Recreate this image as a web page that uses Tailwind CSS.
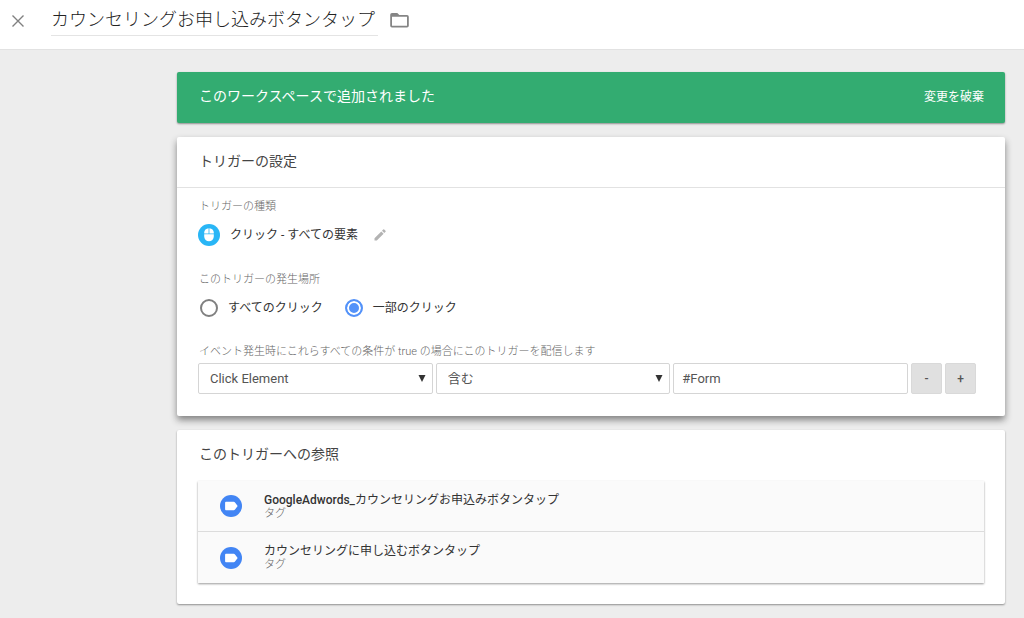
<!DOCTYPE html>
<html lang="ja">
<head>
<meta charset="utf-8">
<meta name="viewport" content="width=device-width, initial-scale=1">
<title>トリガーの設定</title>
<script src="https://cdn.jsdelivr.net/npm/@tailwindcss/browser@4"></script>
</head>
<body class="min-h-screen bg-[#ededed] font-[Roboto,'Noto_Sans_CJK_JP',sans-serif] text-xs text-[#444]">
<header class="flex h-[50px] items-start border-b border-[#e2e2e2] bg-white pl-3">
  <button type="button" aria-label="閉じる" class="mt-[15px] flex size-3 items-center justify-center">
    <svg class="size-3" viewBox="0 0 12 12" fill="none" stroke="#808080" stroke-width="1.400"><path d="M.5.5l11 11M11.5.5l-11 11"/></svg>
  </button>
  <input type="text" aria-label="トリガー名" value="カウンセリングお申し込みボタンタップ" class="ml-[27px] h-9 w-[327px] border-b border-[#e4e4e4] bg-transparent text-lg font-light text-[#222] outline-none">
  <button type="button" aria-label="フォルダ" class="mt-[13px] ml-3">
    <svg class="h-[15px] w-[19px]" viewBox="0 0 19 15"><path fill="#858585" fill-rule="evenodd" d="M2 0h5.300l2 2H17a1.800 1.800 0 0 1 1.800 1.800v9A1.800 1.800 0 0 1 17 14.600H2A1.800 1.800 0 0 1 .2 12.800v-11A1.800 1.800 0 0 1 2 0zm0 3.800v9h15v-9z"/></svg>
  </button>
</header>
<main class="flex flex-col gap-[14px] pt-[22px] pr-[19px] pb-[14px] pl-[177px]">
  <section class="flex h-[51px] items-center justify-between rounded-xs bg-[#33ac71] pr-[21px] pb-[2px] pl-[22px] text-white shadow-[0_1px_2px_rgba(0,0,0,0.4)]">
    <p class="pb-px text-sm">このワークスペースで追加されました</p>
    <button type="button" class="text-xs">変更を破棄</button>
  </section>

  <section class="rounded-xs bg-white pb-[22px] shadow-[0_4px_7px_rgba(0,0,0,0.45)]">
    <h2 class="flex h-[51px] items-center border-b border-[#e2e2e2] px-[22px] pb-[2px] text-sm font-normal">トリガーの設定</h2>
    <div class="pr-[29px] pl-[22px]">
      <h3 class="pt-[11px] text-[11px] leading-4 font-light text-[#666]">トリガーの種類</h3>
      <div class="mt-[9px] flex h-[22px] items-center text-[#333]">
        <svg class="-ml-px size-[22px]" viewBox="0 0 22 22"><circle cx="11" cy="11" r="11" fill="#29b6f6"/><path fill="#fff" d="M10.600 4.200v5.200H6.200V8.500c0-2.400 1.900-4.200 4.400-4.300zM11.400 4.200c2.500.1 4.400 1.900 4.400 4.300v.9h-4.400zM6.200 10.200h9.600v2.300a4.800 4.800 0 0 1-9.600 0z"/></svg>
        <span class="ml-[10px]">クリック - すべての要素</span>
        <button type="button" aria-label="編集" class="ml-4">
          <svg class="size-3" viewBox="0 0 12 12" fill="#b3b3b3"><path d="M.5 9.200l6.800-6.800 2.300 2.300-6.800 6.800H.5zM8 1.700L9.200.5a.7.7 0 0 1 1 0l1.300 1.300a.7.7 0 0 1 0 1L10.300 4z"/></svg>
        </button>
      </div>
      <fieldset>
        <legend class="pt-[26px] text-[11px] leading-4 font-light text-[#666]">このトリガーの発生場所</legend>
        <div class="mt-[9px] flex h-[21px] items-center gap-[22px] text-[#333]">
          <label class="flex items-center gap-[10px]"><input type="radio" name="scope" class="ml-px size-[18px] appearance-none rounded-full border-2 border-[#808080] checked:border-[#5392f9] checked:bg-[#5392f9] checked:shadow-[inset_0_0_0_2px_white]">すべてのクリック</label>
          <label class="flex items-center gap-[10px]"><input type="radio" name="scope" checked class="size-[18px] appearance-none rounded-full border-2 border-[#808080] checked:border-[#5392f9] checked:bg-[#5392f9] checked:shadow-[inset_0_0_0_2px_white]">一部のクリック</label>
        </div>
      </fieldset>
      <p class="pt-[26px] text-[11px] leading-4 font-light text-[#666]">イベント発生時にこれらすべての条件が true の場合にこのトリガーを配信します</p>
      <div class="mt-[3px] -ml-px grid h-[31px] grid-cols-[1fr_1fr_1fr_31px_31px] gap-[3px] text-[13px] text-[#555]">
        <div class="relative">
          <select aria-label="変数" class="size-full appearance-none rounded-xs border border-[#d5d5d5] bg-white pr-6 pl-[11px]"><option>Click Element</option></select>
          <svg class="pointer-events-none absolute top-[12px] right-[7px] h-[7px] w-2" viewBox="0 0 8 7"><path fill="#333" d="M.5 0h7L4 7z"/></svg>
        </div>
        <div class="relative">
          <select aria-label="演算子" class="size-full appearance-none rounded-xs border border-[#d5d5d5] bg-white pr-6 pl-[11px]"><option>含む</option></select>
          <svg class="pointer-events-none absolute top-[12px] right-[7px] h-[7px] w-2" viewBox="0 0 8 7"><path fill="#333" d="M.5 0h7L4 7z"/></svg>
        </div>
        <input type="text" aria-label="値" value="#Form" class="min-w-0 rounded-xs border border-[#d5d5d5] bg-white px-2 outline-none">
        <button type="button" aria-label="条件を削除" class="rounded-xs border border-[#d9d9d9] bg-[#e0e0e0] text-xs font-medium">-</button>
        <button type="button" aria-label="条件を追加" class="rounded-xs border border-[#d9d9d9] bg-[#e0e0e0] text-xs font-medium">+</button>
      </div>
    </div>
  </section>

  <section class="rounded-xs bg-white px-[21px] pb-[21px] shadow-[0_1px_2px_rgba(0,0,0,0.4)]">
    <h2 class="flex h-[51px] items-center pb-[3px] pl-px text-sm font-normal">このトリガーへの参照</h2>
    <ul class="divide-y divide-[#dcdcdc] bg-[#fafafa] shadow-[0_1px_2px_rgba(0,0,0,0.4)]">
      <li class="flex h-[51px] items-center gap-[22px] pl-[22px]">
        <svg class="size-[22px]" viewBox="0 0 22 22"><circle cx="11" cy="11" r="11" fill="#4285f4"/><path fill="#fff" d="M6 6.800h7.700c.6 0 1 .2 1.300.7l2.700 3.500-2.700 3.500c-.3.5-.7.7-1.300.7H6a.9.900 0 0 1-.9-.9V7.700A.9.900 0 0 1 6 6.800z"/></svg>
        <div><a href="#" class="block leading-[14px] text-[#333]"><span class="font-medium">GoogleAdwords_</span>カウンセリングお申込みボタンタップ</a><p class="text-[11px] leading-[13px] font-light text-[#666]">タグ</p></div>
      </li>
      <li class="flex h-[51px] items-center gap-[22px] pl-[22px]">
        <svg class="size-[22px]" viewBox="0 0 22 22"><circle cx="11" cy="11" r="11" fill="#4285f4"/><path fill="#fff" d="M6 6.800h7.700c.6 0 1 .2 1.300.7l2.700 3.500-2.700 3.500c-.3.5-.7.7-1.300.7H6a.9.900 0 0 1-.9-.9V7.700A.9.900 0 0 1 6 6.800z"/></svg>
        <div><a href="#" class="block leading-[14px] text-[#333]">カウンセリングに申し込むボタンタップ</a><p class="text-[11px] leading-[13px] font-light text-[#666]">タグ</p></div>
      </li>
    </ul>
  </section>
</main>
</body>
</html>
